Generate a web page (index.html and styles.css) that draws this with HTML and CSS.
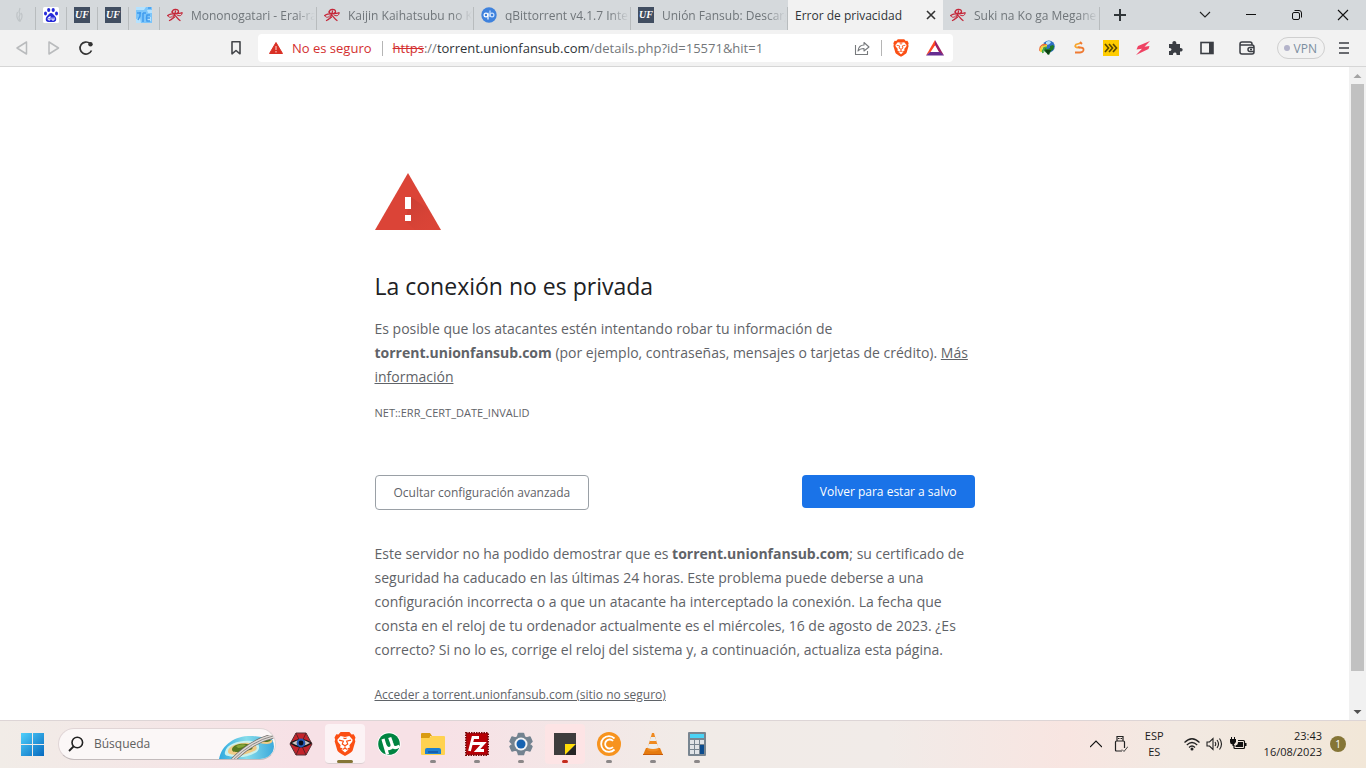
FILE: index.html
```html
<!DOCTYPE html>
<html lang="es">
<head>
  <meta charset="utf-8">
  <title>Error de privacidad</title>
  <meta name="viewport" content="width=device-width, initial-scale=1">
  <link rel="stylesheet" href="styles.css">
</head>
<body>
  <svg class="defs" aria-hidden="true">
    <symbol id="erai" viewBox="0 0 16 16">
      <g fill="none" stroke="#c5283a" stroke-linecap="round">
        <path stroke-width="1.300" d="M5 5.500C5.500 1.500 11.500 1.500 11.500 4.500S5.500 7.500 5 4.500M.8 8.500C4 5.500 10 7.500 15 5.800M8.500 4C8 9 6 12 2.500 13.500M8 8.500C9.500 9.500 10.500 12 13 13.500"/>
        <path stroke-width="1" d="M.8 8.500C1.500 11.500 5.500 10.500 6.500 8M10 8C13 10 15.500 8 15 5.800M6 11.500L8 10"/>
      </g>
    </symbol>
    <symbol id="brave" viewBox="0 0 20 22">
      <path fill="#fb4f14" d="M6 0h8l2 2.200 2-.2 1.600 3-.6 2 .5 1.500-2.500 8.500Q16.500 18.500 10 22 3.500 18.500 3 17L.5 8.500 1 7 .4 5 2 2l2 .2z"/>
      <path fill="#fff" d="M10 4.500l4-.8 3 3.500-.4 1.800-2.600 3.200.5 2-2.300.8 1 1-3.200 2.700L6.800 16l1-1-2.300-.8.5-2L3.400 9 3 7.200l3-3.500z"/>
      <path fill="none" stroke="#fb4f14" stroke-width="1.100" d="M4.500 7.500l4 1L7.500 11l2.500 1.600L12.500 11l-1-2.500 4-1M10 12.500v2.300M7.800 16l2.200-1.200 2.200 1.200M8.500 5.500L10 6l1.500-.5"/>
    </symbol>
  </svg>

  <header class="browser">
    <nav class="tabs" aria-label="Pestañas">
      <a class="tab pinned faded" href="#" aria-label="Pestaña fijada">
        <svg width="16" height="16" viewBox="0 0 16 16"><path fill="none" stroke="#bfc4c7" stroke-width="1.200" d="M8 1L7 5l1 2-1 3 1 5M5.500 5C4 8 5 12 7 14M9 6c2 2 1 6-1 8"/></svg>
      </a>
      <a class="tab pinned" href="#" aria-label="Baidu">
        <svg width="16" height="16" viewBox="0 0 16 16"><rect width="16" height="16" rx="1.500" fill="#fff"/><g fill="#2529d8"><ellipse cx="5.700" cy="3" rx="1.600" ry="2.100"/><ellipse cx="10.200" cy="3" rx="1.600" ry="2.100"/><ellipse cx="2.500" cy="6.600" rx="1.500" ry="2"/><ellipse cx="13.500" cy="6.600" rx="1.500" ry="2"/><path d="M8 6c1.500 0 2.400 1.700 4 3.200 2 2 1.600 5.600-1.200 5.800H5.200C2.400 14.800 2 11.200 4 9.200 5.600 7.700 6.500 6 8 6z"/></g><path fill="none" stroke="#fff" d="M7 9v4H5.500q-1-1 0-2.500H7M9 10.500V13h2v-2.500"/></svg>
      </a>
      <a class="tab pinned" href="#"><span class="uf">UF</span></a>
      <a class="tab pinned" href="#"><span class="uf">UF</span></a>
      <a class="tab pinned" href="#" aria-label="Pestaña fijada">
        <svg width="16" height="16" viewBox="0 0 16 16"><rect width="16" height="16" fill="#7cc5fa"/><path fill="#b5e2ff" d="M0 0h10l-2 3H0zM11 3h5v3h-4zM0 12l4-1 1 5H0zM11 10h4v4h-4z"/><path fill="none" stroke="#3f9bee" stroke-width="1.500" d="M1 6h4M4 5v4l-2 4M7 6v9M7 6h3M14 8h-3q-1 3 0 6h3M11 11h3M12 1h3"/></svg>
      </a>
      <a class="tab" href="#"><svg width="16" height="16"><use href="#erai"/></svg><span class="tab-title">Mononogatari - Erai-raws</span></a>
      <a class="tab" href="#"><svg width="16" height="16"><use href="#erai"/></svg><span class="tab-title">Kaijin Kaihatsubu no Kuroitsu</span></a>
      <a class="tab" href="#">
        <svg width="16" height="16" viewBox="0 0 16 16"><circle cx="8" cy="8" r="7.700" fill="#3f82dd"/><g fill="none" stroke="#fff" stroke-width="1.200"><circle cx="5" cy="8" r="1.900"/><path d="M7 5.800v6.700"/><g stroke="#c9e1ff"><circle cx="11" cy="8" r="1.900"/><path d="M9 3.500V10"/></g></g></svg>
        <span class="tab-title">qBittorrent v4.1.7 Interfaz</span>
      </a>
      <a class="tab" href="#"><span class="uf">UF</span><span class="tab-title">Unión Fansub: Descargas</span></a>
      <div class="tab active">
        <a class="tab-title" href="#">Error de privacidad</a>
        <button class="tab-close" aria-label="Cerrar pestaña"><svg width="10" height="10" viewBox="0 0 10 10"><path stroke="#333" stroke-width="1.600" d="M1 1l8 8M9 1L1 9"/></svg></button>
      </div>
      <a class="tab" href="#"><svg width="16" height="16"><use href="#erai"/></svg><span class="tab-title">Suki na Ko ga Megane wo</span></a>
      <button class="new-tab" aria-label="Nueva pestaña"><svg width="12" height="12" viewBox="0 0 12 12"><path stroke="#303538" stroke-width="2" d="M6 0v12M0 6h12"/></svg></button>
      <div class="window-buttons">
        <button aria-label="Buscar pestañas"><svg width="12" height="12" viewBox="0 0 12 12"><path fill="none" stroke="#222" stroke-width="1.100" d="M1 3l5 5 5-5"/></svg></button>
        <button aria-label="Minimizar"><svg width="12" height="12" viewBox="0 0 12 12"><path stroke="#111" d="M1 5.500h10"/></svg></button>
        <button aria-label="Restaurar"><svg width="12" height="12" viewBox="0 0 12 12"><rect x="1.500" y="3.500" width="7" height="7" rx="1.500" fill="none" stroke="#111"/><path fill="none" stroke="#111" d="M3.500 1.500h4.500q2.500 0 2.500 2.500v4.500"/></svg></button>
        <button aria-label="Cerrar"><svg width="12" height="12" viewBox="0 0 12 12"><path stroke="#111" stroke-width="1.100" d="M1 1l10 10M11 1L1 11"/></svg></button>
      </div>
    </nav>

    <div class="toolbar">
      <button class="tool" aria-label="Atrás"><svg width="14" height="16" viewBox="0 0 14 16"><path fill="none" stroke="#b9bbbd" stroke-width="1.500" stroke-linejoin="round" d="M11.500 2v12L2 8z"/></svg></button>
      <button class="tool" aria-label="Adelante"><svg width="14" height="16" viewBox="0 0 14 16"><path fill="none" stroke="#b9bbbd" stroke-width="1.500" stroke-linejoin="round" d="M2 2v12l9.500-6z"/></svg></button>
      <button class="tool" aria-label="Recargar"><svg width="16" height="16" viewBox="0 0 16 16"><path fill="none" stroke="#333" stroke-width="1.700" d="M13.500 10.500A6 6 0 1 1 12 3.500"/><circle cx="12.500" cy="4.200" r="2.200" fill="#333"/></svg></button>
      <button class="tool bookmark" aria-label="Añadir marcador"><svg width="12" height="16" viewBox="0 0 12 16"><path fill="none" stroke="#44464a" stroke-width="1.600" stroke-linejoin="round" d="M2 1.800h8v12l-4-3.300-4 3.300z"/></svg></button>
      <div class="omnibox">
        <svg width="14" height="14" viewBox="0 0 14 14"><path fill="#d93025" stroke="#d93025" stroke-width="1" stroke-linejoin="round" d="M7 1.500L13.500 12.500H.5z"/><path stroke="#f5a09a" stroke-width="1.500" d="M7 5v4M7 10v1.500"/></svg>
        <span class="insecure">No es seguro</span>
        <label class="url" for="url"><s>https</s>://<b>torrent.unionfansub.com</b></label>
        <input id="url" type="text" value="/details.php?id=15571&amp;hit=1">
        <button class="share" aria-label="Compartir"><svg width="16" height="16" viewBox="0 0 16 16"><path fill="none" stroke="#777a7d" stroke-width="1.100" stroke-linejoin="round" d="M1.500 5v9.500h12V11M4 11C4.500 7 6.500 5 10 5V2.500l5 4.500-5 4V8.500C7 8.500 5.500 9 4 11z"/></svg></button>
        <button class="shield" aria-label="Brave Shields"><svg width="16" height="18"><use href="#brave"/></svg></button>
        <button class="shield bat" aria-label="Brave Rewards"><svg width="18" height="16" viewBox="0 0 18 16"><path fill="#ff4724" d="M9 0v5.500L4.500 12 0 15.500z"/><path fill="#9e1f63" d="M9 0l9 15.500-4.800-3L9 5z"/><path fill="#662d91" d="M0 15.500L4 12h10l4 3.500z"/><path fill="#fff" d="M9 6l3.500 6h-7z"/></svg></button>
      </div>
      <div class="extensions">
        <button class="tool" aria-label="IDM"><svg width="16" height="16" viewBox="0 0 16 16"><circle cx="9.800" cy="6.500" r="6" fill="#2f6fc4"/><path fill="#b5e0fa" d="M7 2q3-2 5 0-1 3-5 3z"/><path fill="none" stroke="#ed6d31" stroke-width="1.300" d="M1 11C0 6 4 3.500 8 5"/><path fill="none" stroke="#f7d72b" stroke-width="1.800" d="M2.300 12C1 8 4 5.500 8 6"/><path fill="none" stroke="#42a843" stroke-width="1.800" d="M4 13C3 9.500 5 7.500 8 7.500"/><path fill="#1f7a26" d="M6 8q2 2 5 0V6l3-1 1 1q0 4-3 5l-2 4-5-4z"/><path fill="#0c3f12" d="M6 10h6l-3 5z"/></svg></button>
        <button class="tool" aria-label="Extensión S"><svg width="14" height="16" viewBox="0 0 14 16"><path fill="none" stroke="#f7a62f" stroke-width="1.800" d="M9 3L4 4.500Q2 7 5 7.500h3"/><path fill="none" stroke="#ef7a32" stroke-width="1.800" d="M3 12.500h5q4-.5 3.500-3.500-.5-1.500-3.500-1.500L6 7M8 2l2 2"/></svg></button>
        <button class="tool" aria-label="Extensión amarilla"><svg width="16" height="16" viewBox="0 0 16 16"><path fill="#fc0" d="M0 0h16v16H0z"/><path fill="none" stroke="#5d4a00" stroke-width="1.700" d="M2 4l3.500 4L2 12M6 4l3.500 4L6 12M10 4l3.500 4-3.500 4"/></svg></button>
        <button class="tool" aria-label="Extensión rayo"><svg width="16" height="16" viewBox="0 0 16 16"><path fill="#ef4263" d="M15 1L3 6 1.500 9.500 7 8.800 1 15l12.500-6 1-3-5 .8z"/></svg></button>
        <button class="tool" aria-label="Extensiones"><svg width="16" height="16" viewBox="0 0 16 16"><path fill="#3b3e44" d="M2 4h3.500C4.500 0 10 0 9.300 4H13v4c3.500-.6 3.500 4 0 3.500V15H9.500c.7-3.500-4-3.500-3.500 0H2v-4c3.300.4 3.300-3.600 0-3z"/></svg></button>
        <button class="tool" aria-label="Barra lateral"><svg width="14" height="14" viewBox="0 0 14 14"><rect x="1" y="1.500" width="12" height="11" fill="none" stroke="#3b3e44" stroke-width="1.600"/><path fill="#3b3e44" d="M9 1h4v12H9z"/></svg></button>
      </div>
      <button class="tool wallet" aria-label="Cartera"><svg width="16" height="14" viewBox="0 0 16 14"><path fill="none" stroke="#3b3e44" stroke-width="1.500" d="M13 4V3q0-2-2-2H3Q1 1 1 3v8q0 2 2 2h10q2 0 2-2V6q0-2-2-2H1M15 6.500h-4q-2 0-2 2t2 2h4M11 8.500h2"/></svg></button>
      <button class="vpn">VPN</button>
      <button class="menu" aria-label="Menú"><svg width="10" height="12" viewBox="0 0 10 12"><path stroke="#3b3e44" stroke-width="1.600" d="M0 1h10M0 6h10M0 11h10"/></svg></button>
    </div>
  </header>

  <div class="viewport">
    <main class="page">
      <div class="interstitial">
        <svg class="warning" width="66" height="57" viewBox="0 0 66 57">
          <defs><linearGradient id="shade" x1="0" y1="0" x2="1" y2="1"><stop offset="0" stop-color="#b73930"/><stop offset="1" stop-color="#db4437" stop-opacity="0"/></linearGradient></defs>
          <path fill="#db4437" d="M33 0l33 57H0z"/>
          <path fill="url(#shade)" d="M36 24l16 11 14 22H40l-10-9z" opacity=".6"/>
          <path fill="#fff" d="M30 24h6v12h-6zM30 42h6v6h-6z"/>
        </svg>
        <h1>La conexión no es privada</h1>
        <p>Es posible que los atacantes estén intentando robar tu información de <strong>torrent.unionfansub.com</strong> (por ejemplo, contraseñas, mensajes o tarjetas de crédito). <a href="#">Más información</a></p>
        <div class="error-code">NET::ERR_CERT_DATE_INVALID</div>
        <div class="actions">
          <button class="secondary">Ocultar configuración avanzada</button>
          <button class="primary">Volver para estar a salvo</button>
        </div>
        <p>Este servidor no ha podido demostrar que es <strong>torrent.unionfansub.com</strong>; su certificado de seguridad ha caducado en las últimas 24 horas. Este problema puede deberse a una configuración incorrecta o a que un atacante ha interceptado la conexión. La fecha que consta en el reloj de tu ordenador actualmente es el miércoles, 16 de agosto de 2023. ¿Es correcto? Si no lo es, corrige el reloj del sistema y, a continuación, actualiza esta página.</p>
        <a class="proceed" href="#">Acceder a torrent.unionfansub.com (sitio no seguro)</a>
      </div>
    </main>
    <div class="scrollbar">
      <svg width="17" height="17" viewBox="0 0 17 17"><path fill="#a3a3a3" d="M8.500 7l4 4h-8z"/></svg>
      <div class="thumb"></div>
      <svg width="17" height="17" viewBox="0 0 17 17"><path fill="#505050" d="M8.500 11l4-4h-8z"/></svg>
    </div>
  </div>

  <footer class="taskbar">
    <button class="start" aria-label="Inicio">
      <svg width="24" height="24" viewBox="0 0 24 24">
        <defs><linearGradient id="win" x1="0" y1="0" x2="1" y2="1"><stop offset="0" stop-color="#4fd0fb"/><stop offset="1" stop-color="#0669bf"/></linearGradient></defs>
        <path fill="url(#win)" d="M1 1h11v11H1zM13 1h11v11H13zM1 13h11v11H1zM13 13h11v11H13z"/>
      </svg>
    </button>
    <label class="search">
      <svg width="16" height="16" viewBox="0 0 16 16"><circle cx="9.300" cy="6.500" r="5.300" fill="none" stroke="#222" stroke-width="1.600"/><path stroke="#222" stroke-width="1.800" d="M5.500 10.500L1 15"/></svg>
      <input type="text" placeholder="Búsqueda" aria-label="Búsqueda">
      <svg class="island" width="56" height="24" viewBox="0 0 56 24">
        <defs><linearGradient id="sea" x1="0" y1="0" x2="1" y2="0"><stop offset="0" stop-color="#2da9e0"/><stop offset=".5" stop-color="#86dcea"/><stop offset="1" stop-color="#3ba9dc"/></linearGradient></defs>
        <path fill="url(#sea)" d="M0 24C3 8 18 0 34 1Q44 2 53 4 58 14 50 22L46 24z"/>
        <path fill="#c8f1ee" d="M6 17C8 8 22 5 32 6S42 15 36 18 24 23 16 22 5 21 6 17z"/>
        <path fill="#efcb87" d="M9 16C10 10 22 7 30 8S40 14 35 16 24 21 17 20 9 19 9 16z"/>
        <path fill="#55791f" d="M13 14C14 9 23 8 28 9S36 14 31 15 25 17 20 17 13 17 13 14z"/>
        <path fill="#85a538" d="M17 11q6-3 10-1-3 3-8 3z"/>
        <path fill="#efcb87" d="M38 6q5-4 15-1 2 3-5 4-8 0-10-3z"/>
        <path fill="#55791f" d="M42 5q6-3 10 0-1 2-6 2z"/>
        <path fill="none" stroke="#706b68" stroke-width="5" d="M14 25Q33 6 54 1"/>
        <path fill="none" stroke="#ddd9d5" stroke-width="3.600" d="M14 25Q33 6 54 1"/>
        <path fill="none" stroke="#8f8a87" d="M14 25Q33 6 54 1"/>
      </svg>
    </label>
    <div class="apps">
      <button aria-label="Ojo rojo"><svg width="24" height="24" viewBox="0 0 24 24"><path fill="#c3232b" stroke="#55353a" d="M7 1h10l6 11-6 11H7L1 12z"/><path stroke="#5c2126" d="M7 1l10 22M17 1L7 23M1 12h22"/><path fill="#171617" d="M1 11Q12 3 23 11 12 20 1 11z"/><path fill="#cfc3be" d="M3 11q9-6 18 0-9 6-18 0z"/><circle cx="12" cy="11" r="4.400" fill="#2459b6"/><circle cx="12" cy="11" r="2.400" fill="#080c19"/></svg></button>
      <button class="current" aria-label="Brave"><svg width="22" height="24"><use href="#brave"/></svg></button>
      <button aria-label="uTorrent"><svg width="24" height="24" viewBox="0 0 24 24"><circle cx="12" cy="12" r="11.700" fill="#fff"/><circle cx="12" cy="12" r="10.800" fill="#008441"/><path fill="none" stroke="#fff" stroke-width="3.200" d="M6 7l4.500 15.500M7.500 12q1.500 5 5 4.500 4-1 2-6l-1.800-5M15 12q1 6 7.500 2"/></svg></button>
      <button class="open" aria-label="Explorador de archivos"><svg width="24" height="24" viewBox="0 0 24 24"><path fill="#d99b11" d="M0 2q0-1 1-1h8l2 3h-2v4H0z"/><path fill="#ffd250" d="M0 6h8l2-2h13q1 0 1 1v17q0 1-1 1H1q-1 0-1-1z"/><path fill="#1d7fd0" d="M4 22v-4q0-2 2-2h12q2 0 2 2v4z"/><path stroke="#1254a0" stroke-width="1.500" d="M7 20h10"/></svg></button>
      <button class="open" aria-label="FileZilla"><svg width="24" height="24" viewBox="0 0 24 24"><path fill="#b50a10" stroke="#7e0b0d" stroke-width="2" stroke-dasharray="1.500 1" d="M1 1h22v22H1z"/><path fill="#b60006" d="M2 2h20v20H2z"/><path fill="none" stroke="#fff" stroke-width="2.800" d="M14 5.500H8L4.500 19M6.500 11.500h6M11 11.500h7.500L12 18.500h7"/></svg></button>
      <button class="open" aria-label="Configuración"><svg width="24" height="24" viewBox="0 0 24 24"><path fill="#738390" stroke="#738390" stroke-width="1.500" stroke-linejoin="round" d="M9.500 1.500h5l1 3.500 2 1 3.500-1 2 4.500-2.500 2.500 2.500 2.500-2 4.500-3.500-1-2 1-1 3.500h-5l-1-3.500-2-1-3.500 1L1 14.500 3.500 12 1 9.500 3 5l3.500 1 2-1z"/><circle cx="12" cy="12" r="6.500" fill="#f4f3f4"/><circle cx="12" cy="12" r="4.500" fill="#1763b1"/></svg></button>
      <button class="open alert" aria-label="Notas rápidas"><svg width="24" height="24" viewBox="0 0 24 24"><path fill="#3e3d3d" d="M1 1h22v11L12 23H1z"/><path fill="#ffdc08" d="M12 23V12h11z"/><path fill="#252525" d="M12 23l11-11v11z"/></svg></button>
      <button class="open" aria-label="Crunchyroll"><svg width="24" height="24" viewBox="0 0 24 24"><circle cx="12" cy="12" r="12" fill="#f7931e"/><g fill="none" stroke="#fff" stroke-width="1.800"><path d="M17.500 17.500A7.800 7.800 0 1 1 17.500 6.500"/><path d="M16 15A4.500 4.500 0 1 1 16 9"/></g></svg></button>
      <button class="open" aria-label="VLC"><svg width="24" height="24" viewBox="0 0 24 24"><path fill="#e57a0e" d="M5 16h14l3 7H2z"/><path fill="#ef8a20" d="M11 1h2l5 17q-6 3-12 0z"/><path fill="#eceded" d="M9.800 5h4.400l1.200 4H8.600zM7.700 12h8.600l1.200 4q-5.500 2-11 0z"/><path fill="#c85c0a" d="M2 22h20v1H2z"/></svg></button>
      <button class="open" aria-label="Calculadora"><svg width="20" height="24" viewBox="0 0 20 24"><rect x="1" width="18" height="24" rx="1" fill="#788590"/><path fill="#4bd3f5" d="M3 2h14v4H3z"/><path fill="#e1e4e7" d="M3 8h4v4H3zM8 8h4v4H8zM13 8h4v4h-4zM3 13h4v4H3zM8 13h4v4H8zM3 18h4v4H3zM8 18h4v4H8z"/><path fill="#0c4c8e" d="M13 13h4v9h-4z"/></svg></button>
    </div>
    <div class="tray">
      <button aria-label="Iconos ocultos"><svg width="12" height="12" viewBox="0 0 12 12"><path fill="none" stroke="#111" stroke-width="1.200" d="M0 9l6-6 6 6"/></svg></button>
      <button class="usb" aria-label="USB"><svg width="14" height="18" viewBox="0 0 14 18"><path fill="none" stroke="#222" stroke-width="1.200" d="M3 6V1.500h6V6M8 16H2.500q-1 0-1-1V7q0-1 1-1h7q1 0 1 1v6M4 3.500h1.500M6.500 3.500H8"/><path fill="none" stroke="#444" d="M8 14.500l2 2 4-5"/></svg></button>
      <button class="lang">ESP<br>ES</button>
      <button class="status" aria-label="Red, volumen y batería">
        <svg width="16" height="14" viewBox="0 0 16 14"><g fill="none" stroke="#222" stroke-width="1.200"><path d="M.5 5.500Q8-2 15.500 5.500M2.800 8q5.200-5 10.400 0M5 10.500q3-3 6 0"/></g><circle cx="8" cy="12" r="1.500" fill="#222"/></svg>
        <svg width="18" height="14" viewBox="0 0 18 14"><path fill="none" stroke="#222" stroke-width="1.100" d="M1 5h2.500L7 1.500v11L3.500 9H1zM9 5q1.500 2 0 4M11 3q3 4 0 8M13.500 1.500q4 5.500 0 11"/></svg>
        <svg width="18" height="14" viewBox="0 0 18 14"><path fill="none" stroke="#111" stroke-width="1.200" d="M8 3.500h5.500q1 0 1 1v6q0 1-1 1H5q-1 0-1-1V8"/><path fill="#111" d="M0 2h1V0h1v2h2V0h1v2h1v3L4 7.500V9H2.500V7.500Q0 7 0 5zM8 5h5v5H5.500V8.500Q8 8 8 5zM15 6h1.500v3H15z"/></svg>
      </button>
      <button class="clock">23:43<br>16/08/2023</button>
      <button class="badge">1</button>
    </div>
  </footer>
</body>
</html>
```

FILE: styles.css
```css
* { margin: 0; padding: 0; box-sizing: border-box; }
body {
  height: 100vh; overflow: hidden;
  display: flex; flex-direction: column;
  font-family: "Open Sans", "Noto Sans", sans-serif;
  font-size: 12px; color: #202124; background: #fff;
}
button { border: none; background: none; font: inherit; color: inherit; cursor: pointer; }
input { border: none; background: none; outline: none; font: inherit; color: inherit; min-width: 0; }
svg { display: block; flex: none; }
.defs { position: absolute; width: 0; height: 0; }

/* tabs */
.browser { flex: none; }
.tabs { display: flex; height: 30px; background: #d5d9dc; }
.tab {
  display: flex; align-items: center; gap: 8px;
  flex: 0 1 157px; min-width: 0; padding: 0 2px 0 7px;
  color: #70767a; text-decoration: none;
  background: linear-gradient(#b8bcbe, #b8bcbe) right bottom / 1px 23px no-repeat;
}
.tab.pinned { flex: 0 0 31px; padding: 0 7px; }
.tab.faded { flex-basis: 36px; padding-left: 12px; }
.tab-title {
  flex: 1; min-width: 0; overflow: hidden; white-space: nowrap;
  -webkit-mask-image: linear-gradient(to right, #000 84%, transparent);
  mask-image: linear-gradient(to right, #000 84%, transparent);
}
.tab.active { flex-basis: 155px; background: #f2f2f2; padding: 0 7px; }
.active .tab-title { color: #303438; text-decoration: none; -webkit-mask-image: none; mask-image: none; }
.tab-close { display: flex; }
.uf {
  flex: none; width: 16px; height: 16px; background: #414e61; color: #fff;
  font: italic bold 10px/16px "Liberation Serif", serif; text-align: center;
}
.new-tab { width: 40px; display: flex; align-items: center; justify-content: center; }
.window-buttons { display: flex; margin-left: auto; }
.window-buttons button { width: 46px; display: flex; align-items: center; justify-content: center; }

/* toolbar */
.toolbar {
  display: flex; align-items: center; height: 37px; padding: 0 10px 0 6px;
  background: #f2f2f2; border-bottom: 1px solid #d6d6d6;
}
.tool { width: 32px; height: 32px; flex: none; display: flex; align-items: center; justify-content: center; }
.bookmark { margin-left: 118px; }
.omnibox {
  flex: 1; min-width: 0; display: flex; align-items: center;
  height: 28px; margin: 0 78px 0 6px; padding: 0 9px 0 11px;
  background: #fff; border-radius: 4px; font-size: 13px; color: #73777a;
}
.insecure { color: #d32f2f; margin-left: 9px; padding-right: 10px; border-right: 1px solid #b5b5b5; line-height: 15px; white-space: nowrap; }
.url { margin-left: 10px; white-space: nowrap; }
.url s { color: #d32f2f; }
.url b { color: #303438; font-weight: 400; }
.omnibox input { flex: 1; }
.share { padding-right: 11px; border-right: 1px solid #b5b5b5; }
.shield { margin-left: 11px; }
.shield.bat { margin-left: 17px; }
.extensions { display: flex; }
.wallet { margin-left: 8px; }
.vpn {
  display: flex; align-items: center; gap: 4px; height: 22px; margin-left: 14px; padding: 0 7px 0 6px;
  border: 1px solid #cfcfcf; border-radius: 11px; color: #7b8ea0;
}
.vpn::before { content: ""; width: 6px; height: 6px; border-radius: 50%; background: #b3b3ca; }
.menu { margin: 0 3px 0 10px; padding: 4px; }

/* page */
.viewport { flex: 1; min-height: 0; display: flex; }
.page { flex: 1; overflow: hidden; }
.interstitial {
  max-width: 600px; margin: 0 auto; padding-top: 106px;
  font-size: 14px; line-height: 24px; color: #5f6368;
}
h1 { margin: 40px 0 15px; font-size: 23px; line-height: 32px; font-weight: 400; color: #202124; }
.interstitial a { color: inherit; }
.error-code { margin-top: 12px; font-size: 11px; }
.actions { display: flex; justify-content: space-between; align-items: flex-start; margin: 50px 0 32px; }
.actions button { padding: 0 18px; border-radius: 4px; font-size: 12px; }
.secondary { height: 35px; border: 1px solid #9aa0a6; color: #5f6368; }
.primary { height: 33px; background: #1a73e8; color: #fff; }
.proceed { display: block; margin-top: 21px; font-size: 12px; }
.scrollbar { flex: none; width: 17px; display: flex; flex-direction: column; background: #f1f1f1; }
.thumb { height: 587px; margin: 0 2px; background: #c1c1c1; }
.scrollbar svg:last-child { margin-top: auto; }

/* taskbar */
.taskbar {
  flex: none; display: flex; align-items: center; height: 48px; padding: 0 20px 2px;
  border-top: 1px solid #ddd5d6;
  background: linear-gradient(90deg, #f1ece7, #f7e1e6 22%, #f7e1e6 32%, #f1ebe7 50%, #f1ebe8 65%, #f8e5e1 78%, #f2e9e2 86%, #f2e7d8);
}
.search {
  display: flex; align-items: center; width: 218px; height: 32px; margin: 0 5px 0 14px; padding-left: 9px;
  background: #fbf7f7; border: 1px solid #e0d5d6; border-bottom-color: #c3bbbc; border-radius: 16px; overflow: hidden;
}
.search input { flex: 1; margin-left: 10px; color: #555; }
.search input::placeholder { color: #606060; opacity: 1; }
.island { margin-top: 6px; }
.apps { display: flex; gap: 4px; }
.apps button {
  width: 40px; height: 40px; display: flex; flex-direction: column; align-items: center;
  padding-top: 8px; gap: 4px; border-radius: 4px;
}
.apps .current { background: #fcf3f5; border-bottom: 1px solid #dcd0d2; }
.open::after, .current::after { content: ""; width: 6px; height: 3px; border-radius: 2px; background: #8b8788; }
.current::after { width: 16px; background: #857536; }
.apps .alert { background: #fde4e5; }
.alert::after { background: #c42b1c; }
.tray { display: flex; align-items: center; margin-left: auto; color: #1b1b1b; font-size: 11px; line-height: 16px; }
.usb { margin-left: 12px; }
.lang { margin-left: 17px; text-align: center; }
.status { display: flex; gap: 6px; margin: 0 16px 0 20px; }
.clock { text-align: right; }
.badge { width: 16px; height: 16px; margin-left: 8px; border-radius: 50%; background: #857536; color: #fff; font-size: 10px; }
```
